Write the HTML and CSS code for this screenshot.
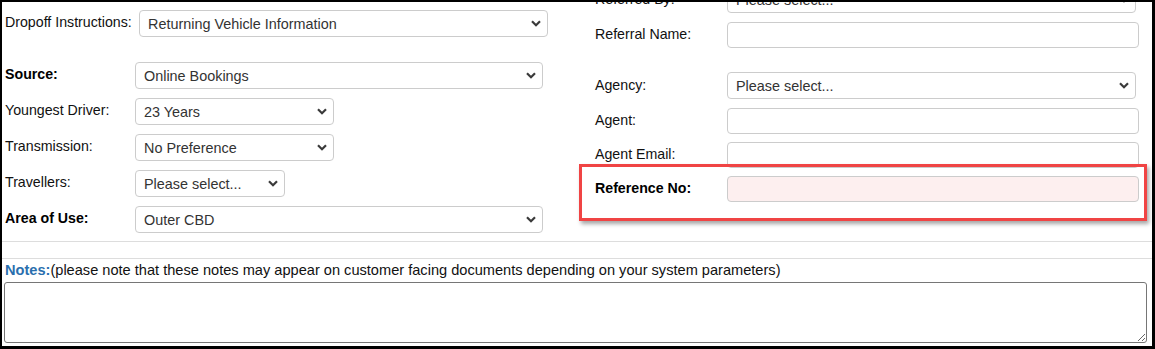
FILE: index.html
```html
<!DOCTYPE html>
<html lang="en">
<head>
  <meta charset="UTF-8" />
  <title>Booking Details</title>
  <link rel="stylesheet" href="styles.css">
</head>
<body>

  <div class="frame">
    <div class="details">
      <div class="col col-left">
        <div class="row row-first">
          <label class="lbl lbl-wide">Dropoff Instructions:</label>
          <span class="sel w409">
            <select><option>Returning Vehicle Information</option></select>
            <svg class="chev" width="10" height="7" viewBox="0 0 10 7"><polyline points="1,1.2 5,5.2 9,1.2" /></svg>
          </span>
        </div>
        <div class="row">
          <label class="lbl bold">Source:</label>
          <span class="sel w408">
            <select><option>Online Bookings</option></select>
            <svg class="chev" width="10" height="7" viewBox="0 0 10 7"><polyline points="1,1.2 5,5.2 9,1.2" /></svg>
          </span>
        </div>
        <div class="row">
          <label class="lbl">Youngest Driver:</label>
          <span class="sel w199">
            <select><option>23 Years</option></select>
            <svg class="chev" width="10" height="7" viewBox="0 0 10 7"><polyline points="1,1.2 5,5.2 9,1.2" /></svg>
          </span>
        </div>
        <div class="row">
          <label class="lbl">Transmission:</label>
          <span class="sel w199">
            <select><option>No Preference</option></select>
            <svg class="chev" width="10" height="7" viewBox="0 0 10 7"><polyline points="1,1.2 5,5.2 9,1.2" /></svg>
          </span>
        </div>
        <div class="row">
          <label class="lbl">Travellers:</label>
          <span class="sel w150">
            <select><option>Please select...</option></select>
            <svg class="chev" width="10" height="7" viewBox="0 0 10 7"><polyline points="1,1.2 5,5.2 9,1.2" /></svg>
          </span>
        </div>
        <div class="row">
          <label class="lbl bold">Area of Use:</label>
          <span class="sel w408">
            <select><option>Outer CBD</option></select>
            <svg class="chev" width="10" height="7" viewBox="0 0 10 7"><polyline points="1,1.2 5,5.2 9,1.2" /></svg>
          </span>
        </div>
      </div>

      <div class="col col-right">
        <div class="row">
          <label class="lbl">Referred By:</label>
          <span class="sel w409">
            <select><option>Please select...</option></select>
            <svg class="chev" width="10" height="7" viewBox="0 0 10 7"><polyline points="1,1.2 5,5.2 9,1.2" /></svg>
          </span>
        </div>
        <div class="row row-input">
          <label class="lbl">Referral Name:</label>
          <input type="text" class="txt" />
        </div>
        <div class="row row-gap">
          <label class="lbl">Agency:</label>
          <span class="sel w409">
            <select><option>Please select...</option></select>
            <svg class="chev" width="10" height="7" viewBox="0 0 10 7"><polyline points="1,1.2 5,5.2 9,1.2" /></svg>
          </span>
        </div>
        <div class="row row-input">
          <label class="lbl">Agent:</label>
          <input type="text" class="txt" />
        </div>
        <div class="row row-input">
          <label class="lbl">Agent Email:</label>
          <input type="text" class="txt" />
        </div>
        <div class="row row-input">
          <label class="lbl bold">Reference No:</label>
          <input type="text" class="txt txt-required" />
        </div>
      </div>
    </div>

    <div class="spacer"></div>

    <div class="notes">
      <p class="notes-title"><b>Notes:</b>(please note that these notes may appear on customer facing documents depending on your system parameters)</p>
      <textarea class="notes-box"></textarea>
    </div>

    <div class="highlight"></div>
  </div>

</body>
</html>
```

FILE: styles.css
```css
* {
  box-sizing: border-box;
}

body {
  margin: 0;
  padding: 0;
  background: #fff;
  font-family: "Liberation Sans", Arial, sans-serif;
  font-size: 14.2px;
  color: #111;
}

.frame {
  position: relative;
  width: 1155px;
  height: 349px;
  border: solid #000;
  border-width: 2px 3px 3px 2px;
  overflow: hidden;
  background: #fff;
}

.details {
  display: flex;
  align-items: flex-start;
}

.col-left {
  width: 573px;
  padding: 8px 0 0 3px;
}

.col-right {
  flex: 1;
  margin-top: -16px;
  padding-left: 20px;
}

.row {
  display: flex;
  align-items: center;
  margin-bottom: 9px;
}

.col-left .row:last-child {
  margin-bottom: 0;
}

.row-first {
  margin-bottom: 25px;
}

.row-input {
  margin-bottom: 8px;
}

.col-right .row:nth-child(2) {
  margin-bottom: 24px;
}

.lbl {
  width: 130px;
  flex: none;
  line-height: 16px;
  padding-bottom: 3px;
  color: #111;
}

.lbl-wide {
  width: 134px;
}

.col-right .lbl {
  width: 132px;
  padding-bottom: 2px;
}

.bold {
  font-weight: bold;
  color: #000;
}

.sel {
  position: relative;
  display: inline-block;
  height: 27px;
}

.sel select {
  -webkit-appearance: none;
  appearance: none;
  width: 100%;
  height: 27px;
  border: 1px solid #cccccc;
  border-radius: 4px;
  background: #fff;
  padding: 0 24px 0 8px;
  font-family: "Liberation Sans", Arial, sans-serif;
  font-size: 14.4px;
  color: #333;
  outline: none;
}

.chev {
  position: absolute;
  right: 7px;
  top: 10px;
  fill: none;
  stroke: #3a3a3a;
  stroke-width: 2.2;
  pointer-events: none;
}

.w409 { width: 409px; }
.w408 { width: 408px; }
.w199 { width: 199px; }
.w150 { width: 150px; }

.txt {
  width: 412px;
  height: 26px;
  border: 1px solid #cccccc;
  border-radius: 4px;
  background: #fff;
  padding: 0 8px;
  font-family: "Liberation Sans", Arial, sans-serif;
  font-size: 14px;
  outline: none;
}

.txt-required {
  background: #fdefef;
}

.spacer {
  height: 18px;
  margin-top: 8px;
  border-top: 1px solid #dddddd;
  border-bottom: 1px solid #dddddd;
}

.notes {
  padding: 0 0 0 2px;
}

.notes-title {
  margin: 3px 0 4px 1px;
  line-height: 16px;
  font-size: 14.6px;
  color: #111;
}

.notes-title b {
  color: #2a6fae;
}

.notes-box {
  display: block;
  width: 1143px;
  height: 61px;
  border: 1px solid #767676;
  border-radius: 3px;
  resize: both;
  font-family: "Liberation Sans", Arial, sans-serif;
}

.highlight {
  position: absolute;
  left: 577px;
  top: 162px;
  width: 568px;
  height: 57px;
  border: 3px solid #f04444;
  box-shadow: 2px 3px 4px rgba(0, 0, 0, 0.35);
  pointer-events: none;
}
```
